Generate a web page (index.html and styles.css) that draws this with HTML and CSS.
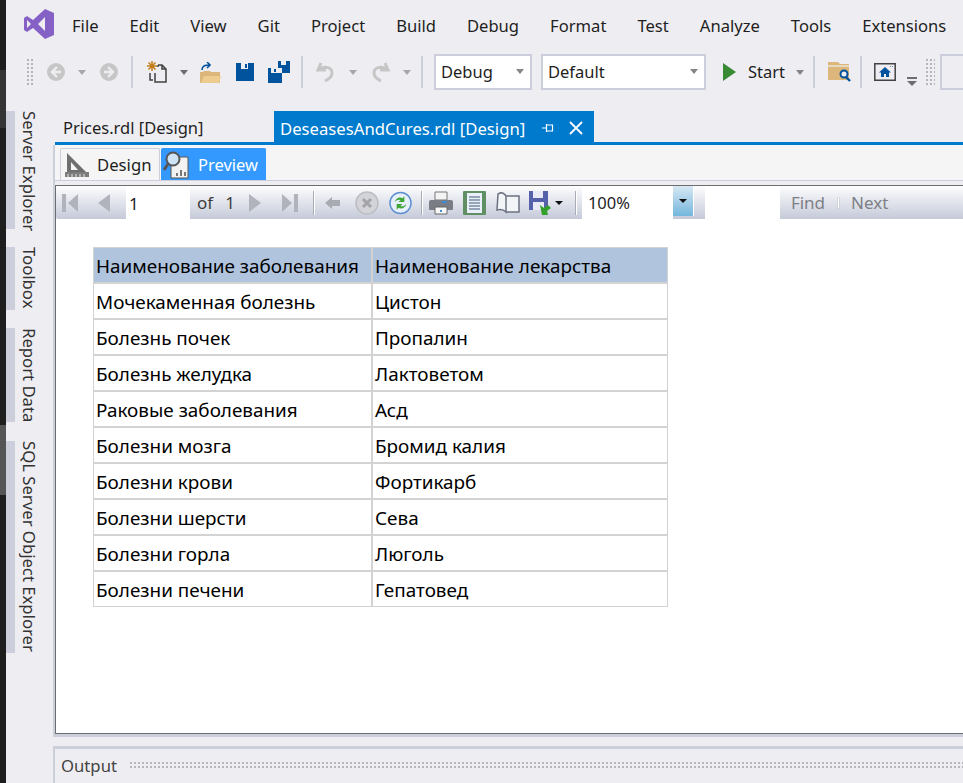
FILE: index.html
```html
<!DOCTYPE html>
<html lang="en">
<head>
  <meta charset="UTF-8">
  <title>DeseasesAndCures.rdl</title>
  <link rel="stylesheet" href="styles.css">
</head>
<body>
<div class="app">
  <div class="desk-strip">
    <div class="seg-a"></div><div class="seg-b"></div><div class="seg-c"></div><div class="seg-d"></div><div class="seg-e"></div>
  </div>
  <div class="main">
    <!-- menu -->
    <div class="menubar">
      <svg class="logo" width="30" height="30" viewBox="0 0 30 30"><path fill="#8661c5" d="M21 0 30 4v22l-9 4-12-11-6 4-3-2V9l3-2 6 4zM21 8l-7 7 7 7zM3 11v8l4-4z"/></svg>
      <span>File</span><span>Edit</span><span>View</span><span>Git</span><span>Project</span><span>Build</span><span>Debug</span><span>Format</span><span>Test</span><span>Analyze</span><span>Tools</span><span>Extensions</span>
    </div>

    <!-- main toolbar -->
    <div class="toolbar">
      <div class="grip"></div>
      <svg class="ml-13" width="18" height="18" viewBox="0 0 18 18"><circle cx="9" cy="9" r="9" fill="#c6c6c6"/><path d="M10 4 5 9l5 5M5 9h9" stroke="#eeeef2" stroke-width="2.4" fill="none"/></svg>
      <div class="caret ml-13"></div>
      <svg class="ml-14" width="18" height="18" viewBox="0 0 18 18"><circle cx="9" cy="9" r="9" fill="#c6c6c6"/><path d="M8 4l5 5-5 5M13 9H4" stroke="#eeeef2" stroke-width="2.4" fill="none"/></svg>
      <div class="sep ml-13"></div>
      <svg class="ml-14" width="20" height="22" viewBox="0 0 20 22"><path d="M5 0v10M0 5h10M1.500 1.500l7 7M8.500 1.500l-7 7" stroke="#c27d1a" stroke-width="1.500"/><path d="M11 4h4l4 4v13H8v-9M11 4v2M15 4v4h4M3 12v7h3" fill="none" stroke="#424242" stroke-width="1.500"/></svg>
      <div class="caret dark ml-13"></div>
      <svg class="ml-12" width="21" height="21" viewBox="0 0 21 21"><path fill="#dcb67a" d="M0 10h3l1-1h6l1 1h9v11H0z"/><path fill="#eecb8f" d="M1 21l3-7h17l-2 7z"/><path d="M2 8C2 4 5 3 9 3M7 0l3 3-3 3" stroke="#00539c" stroke-width="1.600" fill="none"/></svg>
      <svg class="ml-15" width="18" height="18" viewBox="0 0 18 18"><path fill="#00539c" d="M0 0h18v18H0z"/><path fill="#eeeef2" d="M5 0h7v6H5z"/><path fill="#00539c" d="M9 1h2v4H9z"/></svg>
      <svg class="ml-14" width="22" height="22" viewBox="0 0 22 22"><path fill="#00539c" d="M10 0h12v12H10z"/><path fill="#eeeef2" d="M13 0h5v4h-5z"/><path fill="#00539c" d="M0 7h14v15H0z"/><path fill="#eeeef2" d="M3 7h7v5H3zM14 7v5h-4V7z"/><path fill="#00539c" d="M6 8h2v3H6z"/></svg>
      <div class="sep ml-11"></div>
      <svg class="ml-13" width="19" height="20" viewBox="0 0 19 20"><path d="M5 1 2 8h8M3 7c6-3 13-2 13 4 0 3-3 6-7 8" fill="none" stroke="#c6c6c6" stroke-width="3"/></svg>
      <div class="caret ml-14"></div>
      <svg class="ml-14" width="19" height="20" viewBox="0 0 19 20"><path d="M14 1l3 7H9M16 7C10 4 3 5 3 11c0 3 3 6 7 8" fill="none" stroke="#c6c6c6" stroke-width="3"/></svg>
      <div class="caret ml-13"></div>
      <div class="sep ml-10"></div>
      <div class="combo combo-debug ml-11"><span>Debug</span><div class="caret mid"></div></div>
      <div class="combo combo-default ml-9"><span>Default</span><div class="caret mid"></div></div>
      <svg class="ml-17" width="13" height="18" viewBox="0 0 13 18"><path fill="#388a34" d="M0 0l13 9-13 9z"/></svg>
      <span class="start-label">Start</span>
      <div class="caret mid ml-11"></div>
      <div class="sep ml-9"></div>
      <svg class="ml-13" width="23" height="20" viewBox="0 0 23 20"><path fill="#dcb67a" d="M0 0h10l2 2h9v16H0z"/><path fill="#eeeef2" d="M0 3h21v2H0z" opacity=".6"/><circle cx="16" cy="12" r="3.500" fill="#eeeef2" stroke="#00539c" stroke-width="2"/><path d="M18 15l4 4" stroke="#00539c" stroke-width="2.400"/></svg>
      <div class="sep ml-9"></div>
      <svg class="ml-12" width="22" height="18" viewBox="0 0 22 18"><path fill="#eeeef2" stroke="#424242" stroke-width="1.500" d="M.8.8h20.400v16.400H.8z"/><path fill="#00539c" d="M11 4l6 5.500h-2V14h-3v-3h-2v3H7V9.500H5z"/><path fill="#888" d="M16 3h1v1h-1zM18 3h1v1h-1z"/></svg>
      <div class="caret-bar ml-11"></div>
      <div class="grip wide ml-8"></div>
      <div class="search-stub ml-5"></div>
    </div>

    <div class="work">
      <!-- docked tool windows -->
      <div class="side-tabs">
        <div class="side-tab tab-server"><span>Server Explorer</span></div>
        <div class="side-tab tab-toolbox"><span>Toolbox</span></div>
        <div class="side-tab tab-report"><span>Report Data</span></div>
        <div class="side-tab tab-sql"><span>SQL Server Object Explorer</span></div>
      </div>

      <div class="docs">
        <div class="doc-tabs">
          <div class="doc-tab">Prices.rdl [Design]</div>
          <div class="doc-tab active">
            <span>DeseasesAndCures.rdl [Design]</span>
            <svg class="pin" width="12" height="10" viewBox="0 0 12 10"><path d="M0 5h4M4.500 1v8M4.500 2h6v6h-6" fill="none" stroke="#fff" stroke-width="1.200"/></svg>
            <svg class="close" width="14" height="14" viewBox="0 0 14 14"><path d="M1 1l12 12M13 1 1 13" stroke="#fff" stroke-width="1.800"/></svg>
          </div>
        </div>

        <div class="panel">
          <div class="view-tabs">
            <div class="view-tab">
              <svg width="24" height="26" viewBox="0 0 24 26"><path fill="#6f6f6f" d="M2 1v20h20zM6 10l7 8H6z" fill-rule="evenodd"/><path fill="#7d7d7d" d="M0 20h24v5H0z"/><path stroke="#e8e8e8" d="M3 22v3M7 22v3M11 22v3M15 22v3M19 22v3"/></svg>
              <span>Design</span>
            </div>
            <div class="view-tab preview">
              <svg width="27" height="28" viewBox="0 0 27 28"><path fill="#f2f2f2" stroke="#555" d="M11 6h14v21H8V14"/><path fill="#777" d="M13 22h2v3h-2zM17 19h2v6h-2zM21 21h2v4h-2z"/><circle cx="10" cy="8" r="6.500" fill="#cfe3f7" stroke="#555" stroke-width="2"/><path d="M5 13l-4 6" stroke="#555" stroke-width="3"/></svg>
              <span>Preview</span>
            </div>
          </div>

          <div class="viewer">
            <div class="report-bar">
              <svg class="rml-6" width="16" height="18" viewBox="0 0 16 18"><path fill="#b0b3bb" d="M0 0h4v18H0zM16 0v18L6 9z"/></svg>
              <svg class="rml-18" width="14" height="18" viewBox="0 0 14 18"><path fill="#b0b3bb" d="M14 0v18L2 9z"/></svg>
              <div class="page-input rml-16">1</div>
              <span class="rtext rml-7">of</span>
              <span class="rtext rml-12">1</span>
              <svg class="rml-14" width="14" height="18" viewBox="0 0 14 18"><path fill="#b0b3bb" d="M0 0v18L12 9z"/></svg>
              <svg class="rml-19" width="16" height="18" viewBox="0 0 16 18"><path fill="#b0b3bb" d="M12 0h4v18h-4zM0 0v18L10 9z"/></svg>
              <div class="rsep rml-15"></div>
              <svg class="rml-11" width="15" height="14" viewBox="0 0 15 14"><path fill="#a9abb2" d="M0 7l7-6v3h8v6H7v3z"/></svg>
              <svg class="rml-15" width="24" height="24" viewBox="0 0 24 24"><circle cx="12" cy="12" r="11" fill="#d3d4d9" stroke="#bcbcc2" stroke-width="1.500"/><path d="M8 8l8 8M16 8l-8 8" stroke="#a3a3a8" stroke-width="3"/></svg>
              <svg class="rml-10" width="23" height="24" viewBox="0 0 24 24"><circle cx="12" cy="12" r="11" fill="#e6effa" stroke="#5b8fd0" stroke-width="1.500"/><path d="M6 11c1-4 5-6 8-4l2-2v6h-6l2-2c-2-1-4 0-6 2zM18 13c-1 4-5 6-8 4l-2 2v-6h6l-2 2c2 1 4 0 6-2z" fill="#3fa535"/></svg>
              <div class="rsep rml-9"></div>
              <svg class="rml-7" width="24" height="24" viewBox="0 0 24 24"><path fill="#f4f4f4" stroke="#777" d="M6 1h12v8H6z"/><path fill="#7a7d85" d="M2 9h20q2 0 2 2v7q0 1-1 1H1q-1 0-1-1v-7q0-2 2-2z"/><path fill="#f8f8f8" stroke="#666" d="M6 16h12v7H6z"/><path fill="#3b8ed0" d="M13 10h5v2h-5zM11 19h2v2h-2z"/></svg>
              <svg class="rml-10" width="23" height="24" viewBox="0 0 23 24"><path fill="#5f8f62" d="M1 0h21q1 0 1 1v22q0 1-1 1H1q-1 0-1-1V1q0-1 1-1z"/><path fill="#e9f0fa" d="M4 2h15v20H4z"/><path stroke="#7a8aa0" stroke-width="1.400" d="M6 6h11M6 9h11M6 12h11M6 15h11M6 18h11"/></svg>
              <svg class="rml-10" width="24" height="22" viewBox="0 0 24 22"><path fill="#f2f4f8" stroke="#6c7280" stroke-width="1.500" d="M2 2c3-2 6-1 8 2v16c-2-2-5-3-9-2zM10 4h13v16H10z"/></svg>
              <svg class="rml-9" width="25" height="24" viewBox="0 0 25 24"><path fill="#5561a8" d="M0 0h19v19H0z"/><path fill="#e8ebf6" d="M4 0h10v7H4z"/><path fill="#e8ebf6" d="M4 11h11v8H4z"/><path fill="#33a02c" d="M11 14l4 3 4-3 3 3-4 3 1 4h-6z"/></svg>
              <div class="mini-caret rml-1"></div>
              <div class="rsep rml-12"></div>
              <div class="zoom-box rml-6">100%</div>
              <div class="zoom-arrow"><div class="mini-caret"></div></div>
              <div class="find-input rml-11"></div>
              <span class="rtext muted rml-11">Find</span>
              <div class="find-sep rml-13"></div>
              <span class="rtext muted rml-12">Next</span>
            </div>

            <div class="report-body">
              <table class="report">
                <tr><th>Наименование заболевания</th><th>Наименование лекарства</th></tr>
                <tr><td>Мочекаменная болезнь</td><td>Цистон</td></tr>
                <tr><td>Болезнь почек</td><td>Пропалин</td></tr>
                <tr><td>Болезнь желудка</td><td>Лактоветом</td></tr>
                <tr><td>Раковые заболевания</td><td>Асд</td></tr>
                <tr><td>Болезни мозга</td><td>Бромид калия</td></tr>
                <tr><td>Болезни крови</td><td>Фортикарб</td></tr>
                <tr><td>Болезни шерсти</td><td>Сева</td></tr>
                <tr><td>Болезни горла</td><td>Люголь</td></tr>
                <tr><td>Болезни печени</td><td>Гепатовед</td></tr>
              </table>
            </div>
          </div>
        </div>

        <div class="output">
          <span>Output</span>
          <div class="output-grip"></div>
        </div>
      </div>
    </div>
  </div>
</div>
</body>
</html>
```

FILE: styles.css
```css
html, body { margin: 0; height: 100%; overflow: hidden; }
body { font-family: "Noto Sans", "Open Sans", Arial, sans-serif; font-size: 16.6px; color: #1e1e1e; background: #eeeef2; }
svg { display: block; flex: none; }

.app { display: flex; height: 783px; }
.desk-strip { width: 6px; flex: none; display: flex; flex-direction: column; background: #1e1e1e; }
.seg-a { height: 70px; background: #1e1e1e; }
.seg-b { height: 58px; background: #343434; }
.seg-c { height: 297px; background: #1e1e1e; }
.seg-d { height: 70px; background: #555; }
.seg-e { flex: 1; background: #1e1e1e; }
.main { flex: 1; min-width: 0; display: flex; flex-direction: column; }

/* menu */
.menubar { height: 54px; display: flex; align-items: center; flex: none; padding: 0 0 3px 18px; gap: 31px; box-sizing: border-box; white-space: nowrap; }
.logo { margin-right: -13px; align-self: flex-start; margin-top: 9px; }

/* toolbar */
.toolbar { height: 36px; flex: none; display: flex; align-items: center; padding-left: 20px; white-space: nowrap; font-size: 16.5px; }
.grip { width: 8px; height: 28px; flex: none; background-image: radial-gradient(#b5b5bb 1px, transparent 1.200px); background-size: 4px 4px; }
.grip.wide { width: 10px; }
.caret { width: 0; height: 0; border-left: 4px solid transparent; border-right: 4px solid transparent; border-top: 5px solid #a8a8ac; flex: none; }
.caret.dark { border-top-color: #6d6d6d; }
.caret.mid { border-top-color: #858585; }
.caret-bar { width: 10px; height: 8px; margin-top: 18px; flex: none; border-top: 2px solid #6d6d6d; box-sizing: border-box; position: relative; }
.caret-bar::after { content: ""; position: absolute; left: 0; top: 2px; border-left: 5px solid transparent; border-right: 5px solid transparent; border-top: 5px solid #6d6d6d; }
.sep { width: 2px; height: 32px; background: #cccedb; flex: none; }
.combo { height: 36px; box-sizing: border-box; border: 2px solid #cccedb; background: #fff; display: flex; align-items: center; justify-content: space-between; padding: 0 6px 2px 5px; flex: none; }
.combo-debug { width: 98px; }
.combo-default { width: 165px; }
.start-label { margin: 0 0 1px 12px; }
.search-stub { flex: 1; height: 36px; border: 2px solid #cccedb; border-right: 0; box-sizing: border-box; }

.ml-5 { margin-left: 5px; }
.ml-8 { margin-left: 8px; }
.ml-9 { margin-left: 9px; }
.ml-10 { margin-left: 10px; }
.ml-11 { margin-left: 11px; }
.ml-12 { margin-left: 12px; }
.ml-13 { margin-left: 13px; }
.ml-14 { margin-left: 14px; }
.ml-15 { margin-left: 15px; }
.ml-17 { margin-left: 17px; }

/* work area */
.work { flex: 1; display: flex; min-height: 0; }
.side-tabs { width: 47px; flex: none; display: flex; flex-direction: column; padding-top: 21px; box-sizing: border-box; }
.side-tab { border-left: 9px solid #cccedb; padding-left: 6px; box-sizing: border-box; }
.side-tab span { writing-mode: vertical-rl; display: block; color: #333; font-size: 16.7px; line-height: 16px; white-space: nowrap; }
.tab-server { height: 118px; }
.tab-toolbox { height: 63px; margin-top: 18px; }
.tab-report { height: 94px; margin-top: 18px; }
.tab-sql { height: 212px; margin-top: 19px; }

.docs { flex: 1; min-width: 0; display: flex; flex-direction: column; padding-top: 21px; }
.doc-tabs { height: 34px; flex: none; display: flex; margin-left: 2px; border-bottom: 3px solid #007acc; box-sizing: border-box; }
.doc-tab { width: 219px; padding-left: 8px; box-sizing: border-box; line-height: 33px; white-space: nowrap; font-size: 16.5px; }
.doc-tab.active { width: 320px; height: 34px; padding-left: 6px; background: #007acc; color: #fff; display: flex; align-items: center; font-size: 16.7px; }
.pin { margin-left: 17px; }
.close { margin-left: 15px; }

.panel { height: 592px; flex: none; display: flex; flex-direction: column; border-left: 2px solid #cccedb; border-bottom: 3px solid #cccedb; box-sizing: border-box; }
.view-tabs { height: 35px; flex: none; display: flex; align-items: flex-end; padding-left: 5px; background: #f5f5f5; border-bottom: 1px solid #cccedb; box-sizing: content-box; }
.view-tab { height: 32px; width: 100px; display: flex; align-items: center; gap: 8px; box-sizing: border-box; padding-left: 4px; border: 1px solid #cccedb; border-bottom: 0; border-radius: 2px 2px 0 0; font-size: 16.7px; }
.view-tab.preview { width: 105px; gap: 8px; margin-left: 1px; padding-left: 1px; background: #3399ff; border-color: #3399ff; color: #fff; font-size: 16.5px; }

.viewer { flex: 1; display: flex; flex-direction: column; margin-top: 4px; border-top: 1px solid #6d6d6d; border-left: 1px solid #6d6d6d; border-bottom: 1px solid #6d6d6d; min-height: 0; }
.report-bar { height: 33px; flex: none; display: flex; align-items: center; background: linear-gradient(#fdfdfe, #c5cad9); border-bottom-left-radius: 3px; white-space: nowrap; }
.rtext { color: #3d3d3d; font-size: 17px; }
.rtext.muted { color: #7d7f85; }
.rsep { width: 1px; height: 24px; background: #a7abb6; box-shadow: 1px 0 0 #fff; flex: none; }
.page-input { width: 64px; height: 33px; background: #fff; line-height: 35px; padding-left: 3px; box-sizing: border-box; flex: none; font-size: 17px; }
.zoom-box { width: 91px; height: 33px; background: #fff; line-height: 33px; padding-left: 6px; box-sizing: border-box; flex: none; font-size: 16.5px; }
.zoom-arrow { width: 20px; height: 30px; margin-bottom: 3px; background: linear-gradient(#d8e8f4, #74b6dc); display: flex; align-items: center; justify-content: center; flex: none; border-right: 1px solid #fff; }
.mini-caret { width: 0; height: 0; flex: none; border-left: 4px solid transparent; border-right: 4px solid transparent; border-top: 4px solid #111; }
.find-input { width: 75px; height: 33px; background: #fff; flex: none; }
.find-sep { width: 1px; height: 10px; background: #fff; box-shadow: 0 0 0 .5px #c0c3cc; flex: none; }

.rml-1 { margin-left: 1px; }
.rml-6 { margin-left: 6px; }
.rml-7 { margin-left: 7px; }
.rml-9 { margin-left: 9px; }
.rml-10 { margin-left: 10px; }
.rml-11 { margin-left: 11px; }
.rml-12 { margin-left: 12px; }
.rml-13 { margin-left: 13px; }
.rml-14 { margin-left: 14px; }
.rml-15 { margin-left: 15px; }
.rml-16 { margin-left: 16px; }
.rml-18 { margin-left: 18px; }
.rml-19 { margin-left: 19px; }

.report-body { flex: 1; background: #fff; padding: 28px 0 0 37px; min-height: 0; }
table.report { border-collapse: separate; border-spacing: 0; width: 575px; table-layout: fixed; color: #000; }
.report th, .report td { height: 36px; box-sizing: border-box; padding: 2px 0 0 2px; border: 1px solid #d3d3d3; font-weight: 400; text-align: left; white-space: nowrap; font-size: 18.9px; }
.report th { background: #b0c4de; }
.report th:first-child { width: 279px; }

.output { flex: 1; display: flex; align-items: center; margin-top: 9px; border-top: 3px solid #cccedb; border-left: 2px solid #cccedb; padding: 0 0 2px 6px; color: #444; font-size: 16.7px; }
.output-grip { flex: 1; height: 8px; margin-left: 12px; background-image: radial-gradient(#b5b5bb 1px, transparent 1.200px); background-size: 4px 4px; }
```
